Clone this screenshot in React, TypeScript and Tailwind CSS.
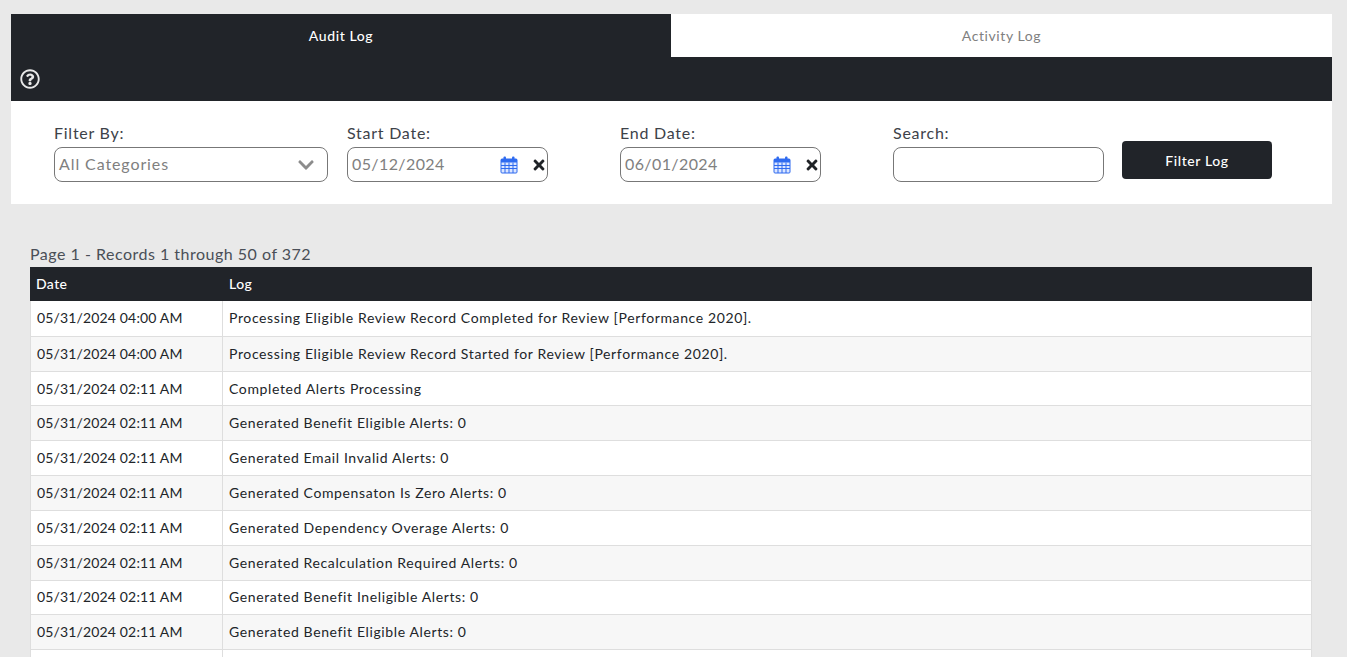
import React from 'react';
import { FaChevronDown, FaRegQuestionCircle, FaTimes } from 'react-icons/fa';

const rows = [
  ['05/31/2024 04:00 AM', 'Processing Eligible Review Record Completed for Review [Performance 2020].'],
  ['05/31/2024 04:00 AM', 'Processing Eligible Review Record Started for Review [Performance 2020].'],
  ['05/31/2024 02:11 AM', 'Completed Alerts Processing'],
  ['05/31/2024 02:11 AM', 'Generated Benefit Eligible Alerts: 0'],
  ['05/31/2024 02:11 AM', 'Generated Email Invalid Alerts: 0'],
  ['05/31/2024 02:11 AM', 'Generated Compensaton Is Zero Alerts: 0'],
  ['05/31/2024 02:11 AM', 'Generated Dependency Overage Alerts: 0'],
  ['05/31/2024 02:11 AM', 'Generated Recalculation Required Alerts: 0'],
  ['05/31/2024 02:11 AM', 'Generated Benefit Ineligible Alerts: 0'],
  ['05/31/2024 02:11 AM', 'Generated Benefit Eligible Alerts: 0'],
  ['', ''],
];

const CalendarIcon = () => (
  <svg width="18" height="18" viewBox="0 0 18 18" className="shrink-0">
    <rect x="1" y="3" width="16" height="14" rx="1" fill="#dbe6ff" stroke="#2f6bf0" strokeWidth="1" />
    <rect x="1" y="3" width="16" height="3.5" fill="#2f6bf0" />
    <path d="M1 9.5H17M1 12.5H17M5 6.5V17M9 6.5V17M13 6.5V17" stroke="#2f6bf0" strokeWidth="1" />
    <rect x="3.5" y="0.5" width="2.5" height="4.5" rx="1" fill="#2f6bf0" />
    <rect x="12" y="0.5" width="2.5" height="4.5" rx="1" fill="#2f6bf0" />
  </svg>
);

const DateField = ({ label, value, className }: { label: string; value: string; className: string }) => (
  <div className={`flex flex-col ${className}`}>
    <label className="text-[16px] leading-[20px] h-[24px] mt-[-1px] tracking-[0.75px] text-[#3d4249]">{label}</label>
    <div className="h-[35px] w-[201px] border border-[#777] rounded-[8px] flex items-center pl-[4px] pr-[1px] text-[16px] tracking-[0.4px] text-[#808080]">
      <span className="flex-1 pb-[2px]">{value}</span>
      <CalendarIcon />
      <FaTimes className="ml-[14px] w-[14px] h-[16px] text-[#202327]" />
    </div>
  </div>
);

const App: React.FC = () => {
  return (
    <div className="h-screen overflow-hidden bg-[#e9e9e9] pt-[14px] font-['Lato','Noto_Sans',sans-serif]">
      <div className="mx-[11px] w-[1321px]">
        <div className="flex h-[43px] text-[14px] tracking-[0.6px]">
          <div className="w-[660px] bg-[#212429] text-white font-medium flex items-center justify-center">Audit Log</div>
          <div className="flex-1 bg-white text-[#808080] flex items-center justify-center">Activity Log</div>
        </div>
        <div className="h-[44px] bg-[#212429] flex items-center pl-[9px]">
          <FaRegQuestionCircle className="w-[20px] h-[20px] text-[#e8e8e8]" />
        </div>
        <div className="h-[103px] bg-white flex pl-[43px] pt-[23px]">
          <div className="flex flex-col w-[274px]">
            <label className="text-[16px] leading-[20px] h-[24px] mt-[-1px] tracking-[0.75px] text-[#3d4249]">Filter By:</label>
            <div className="h-[35px] border border-[#777] rounded-[8px] flex items-center pl-[4px] pr-[12px] text-[16px] tracking-[0.9px] text-[#808080]">
              <span className="flex-1 pb-[2px]">All Categories</span>
              <FaChevronDown className="w-[18px] h-[18px] text-[#8c8c8c]" />
            </div>
          </div>
          <DateField label="Start Date:" value="05/12/2024" className="ml-[19px]" />
          <DateField label="End Date:" value="06/01/2024" className="ml-[72px]" />
          <div className="flex flex-col ml-[72px] w-[211px]">
            <label className="text-[16px] leading-[20px] h-[24px] mt-[-1px] tracking-[0.75px] text-[#3d4249]">Search:</label>
            <div className="h-[35px] border border-[#777] rounded-[8px]" />
          </div>
          <button className="ml-[18px] mt-[17px] w-[150px] h-[38px] rounded-[4px] bg-[#212429] text-white text-[14px] tracking-[0.6px] font-medium">Filter Log</button>
        </div>
        <div className="mx-[19px] mt-[40px]">
          <div className="h-[23px] text-[16px] leading-[20px] tracking-[0.5px] text-[#4a4f57]">Page 1 - Records 1 through 50 of 372</div>
          <table className="w-[1282px] table-fixed border-separate border-spacing-0 text-[14px] text-[#212529]">
            <thead>
              <tr className="h-[34px] bg-[#212429] text-white text-left">
                <th className="w-[193px] pl-[6px] pb-[2px] font-medium tracking-[0.4px]">Date</th>
                <th className="pl-[6px] pb-[2px] font-medium tracking-[0.4px]">Log</th>
              </tr>
            </thead>
            <tbody>
              {rows.map((r, i) => (
                <tr key={i} className={`${i === 0 ? 'h-[35.82px]' : 'h-[34.82px]'} ${i % 2 === 0 ? 'bg-white' : 'bg-[#f7f7f7]'}`}>
                  <td className={`pl-[6px] ${i === 0 ? 'pb-[2px]' : 'pb-[1px]'} border-l border-r border-b border-[#dedede] tracking-[0.15px]`}>{r[0]}</td>
                  <td className={`pl-[6px] ${i === 0 ? 'pb-[2px]' : 'pb-[1px]'} border-r border-b border-[#dedede] tracking-[0.62px]`}>{r[1]}</td>
                </tr>
              ))}
            </tbody>
          </table>
        </div>
      </div>
    </div>
  );
};

export default App;
